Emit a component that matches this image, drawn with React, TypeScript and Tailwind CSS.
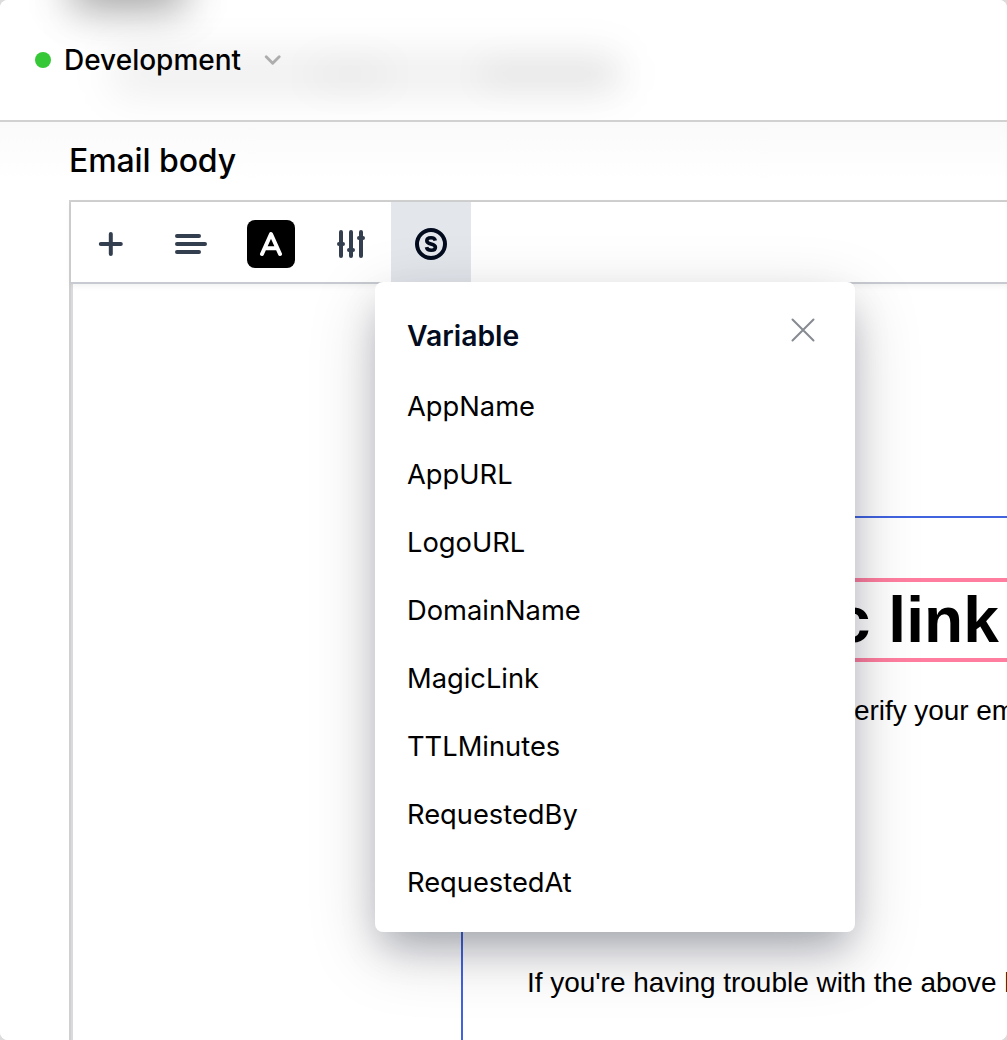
import React from "react";

const variables = [
  "AppName",
  "AppURL",
  "LogoURL",
  "DomainName",
  "MagicLink",
  "TTLMinutes",
  "RequestedBy",
  "RequestedAt",
];

function ToolButton({ active, children }: { active?: boolean; children: React.ReactNode }) {
  return (
    <button
      className={
        active
          ? "flex h-20 w-20 items-center justify-center bg-[#e3e7ec] pt-1 text-[#020c1e]"
          : "flex h-20 w-20 items-center justify-center pt-1 text-[#333e4f]"
      }
    >
      {children}
    </button>
  );
}

function PlusIcon() {
  return (
    <svg width="48" height="48" viewBox="0 0 48 48" fill="none" stroke="currentColor" strokeWidth="4" strokeLinecap="round">
      <path d="M13.800 24H33.800M23.800 14V34" />
    </svg>
  );
}

function AlignIcon() {
  return (
    <svg width="48" height="48" viewBox="0 0 48 48" fill="none" stroke="currentColor" strokeWidth="4" strokeLinecap="round">
      <path d="M10 16H32M10 24H38M10 32H32" />
    </svg>
  );
}

function TextIcon() {
  return (
    <span className="flex h-12 w-12 items-center justify-center rounded-lg bg-black text-white">
      <svg width="48" height="48" viewBox="0 0 48 48" fill="none" stroke="currentColor" strokeWidth="4" strokeLinecap="round" strokeLinejoin="round">
        <path d="M15 34L24 14L33 34M18 28.300H30" />
      </svg>
    </span>
  );
}

function SlidersIcon() {
  return (
    <svg width="48" height="48" viewBox="0 0 48 48" fill="none" stroke="currentColor" strokeWidth="4" strokeLinecap="round">
      <path d="M14 12V36M24 12V36M34 12V36" />
      <path d="M12 24H16M22 30H26M32 18H36" />
    </svg>
  );
}

function VariableIcon() {
  return (
    <svg width="48" height="48" viewBox="0 0 48 48" fill="none" stroke="currentColor" strokeWidth="4">
      <circle cx="24" cy="24" r="14" />
      <path
        strokeWidth="3.600"
        d="M28.300 20.700C27.900 18.800 26.300 17.800 24 17.800C21.500 17.800 19.800 18.900 19.800 20.700C19.800 22.700 21.500 23.300 24 23.900C26.700 24.500 28.400 25.200 28.400 27.200C28.400 29.200 26.700 30.300 24.200 30.300C21.600 30.300 19.900 29.200 19.500 27.200"
      />
    </svg>
  );
}

function Header() {
  return (
    <header className="relative z-10 flex h-[122px] shrink-0 items-center overflow-hidden border-b-2 border-[#d1d1d1] bg-white pl-[35px]">
      <div className="absolute left-[72px] top-[-42px] h-11 w-[112px] rounded-xl bg-black/40 blur-[22px]" />
      <div className="absolute left-[66px] top-[-20px] h-11 w-[124px] rounded-xl bg-black/6 blur-[18px]" />
      <div className="absolute left-[112px] top-[54px] h-10 w-[508px] rounded-xl bg-black/7 blur-[20px]" />
      <div className="absolute left-[310px] top-[62px] h-6 w-[80px] rounded-xl bg-black/4 blur-[18px]" />
      <div className="absolute left-[480px] top-[62px] h-6 w-[140px] rounded-xl bg-black/5 blur-[16px]" />
      <span className="relative h-4 w-4 rounded-full bg-[#37c837]" />
      <span className="relative ml-[13px] w-[177px] whitespace-nowrap text-[28px] font-medium leading-9">
        Development
      </span>
      <svg className="relative ml-[21px]" width="20" height="20" viewBox="0 0 20 20" fill="none" stroke="#adadad" strokeWidth="2.900" strokeLinecap="round" strokeLinejoin="round">
        <path d="M4.200 6.800L10.700 13.200L17.200 6.800" />
      </svg>
    </header>
  );
}

function VariableMenu() {
  return (
    <div className="absolute left-[304px] top-20 z-20 h-[650px] w-[480px] rounded-lg bg-white px-8 shadow-[0_20px_36px_-8px_rgba(2,12,30,0.26),0_20px_68px_0_rgba(2,12,30,0.18)]">
      <div className="flex h-[90px] items-start justify-between pt-9">
        <h2 className="text-[28.300px] font-semibold leading-9 text-[#020c1e]">Variable</h2>
        <svg className="mr-2" width="24" height="24" viewBox="0 0 24 24" fill="none" stroke="#868b92" strokeWidth="2" strokeLinecap="round">
          <path d="M1.500 1.500L22.500 22.500M22.500 1.500L1.500 22.500" />
        </svg>
      </div>
      <ul>
        {variables.map((name) => (
          <li key={name} className="flex h-[68px] items-center pt-0.5 text-[27.300px] text-black">
            {name}
          </li>
        ))}
      </ul>
    </div>
  );
}

function EmailCanvas() {
  return (
    <div className="flex h-full flex-col border-l-2 border-[#d8dadd] pt-[232px] font-['Liberation_Sans']">
      <div className="ml-[388px] h-[600px] border-l-2 border-t-2 border-[#4163e0]">
        <div className="mt-[60px] flex h-[84px] items-center border-y-4 border-[#ff7e9f]">
          <h1 className="w-[536px] whitespace-nowrap text-right text-[64px] font-bold leading-none tracking-[0.1px]">Magic link</h1>
        </div>
        <p className="ml-[377px] mt-[31px] whitespace-nowrap text-[28px] leading-9 tracking-[-0.05px]">verify your email</p>
        <p className="ml-16 mt-[236px] whitespace-nowrap text-[28px] leading-9 tracking-[-0.03px]">
          If you're having trouble with the above link
        </p>
      </div>
    </div>
  );
}

export default function App() {
  return (
    <div className="h-[1040px] w-[1007px] overflow-hidden bg-[#dcdcdc]">
      <div className="flex h-full flex-col overflow-hidden rounded-lg bg-white font-['Inter'] text-black">
        <Header />
        <main className="flex min-h-0 grow flex-col bg-linear-to-b from-[#fafafa] to-white to-[60px] pl-[69px]">
          <h2 className="h-[78px] shrink-0 pt-[19px] text-[32px] font-medium leading-10 tracking-[-0.1px]">Email body</h2>
          <section className="flex min-h-0 w-[1000px] grow flex-col border-l-2 border-t-2 border-[#d0d0d0] bg-white">
            <div className="relative z-10 flex h-[82px] shrink-0 border-b-2 border-[#c7cbd1] shadow-[0_2px_6px_rgba(0,0,0,0.06)]">
              <ToolButton><PlusIcon /></ToolButton>
              <ToolButton><AlignIcon /></ToolButton>
              <ToolButton><TextIcon /></ToolButton>
              <ToolButton><SlidersIcon /></ToolButton>
              <ToolButton active><VariableIcon /></ToolButton>
              <VariableMenu />
            </div>
            <EmailCanvas />
          </section>
        </main>
      </div>
    </div>
  );
}
